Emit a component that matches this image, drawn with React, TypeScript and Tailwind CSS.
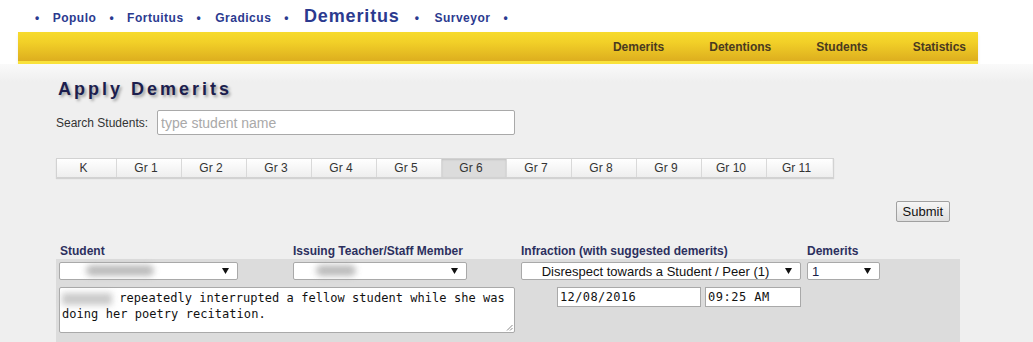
const grades = ["K", "Gr 1", "Gr 2", "Gr 3", "Gr 4", "Gr 5", "Gr 6", "Gr 7", "Gr 8", "Gr 9", "Gr 10", "Gr 11"];

const Arrow = () => (
  <svg width="7" height="6" viewBox="0 0 7 6" className="shrink-0">
    <path d="M0 0h7L3.5 6z" fill="#111" />
  </svg>
);

const FakeSelect = ({ width, children }: { width: string; children: React.ReactNode }) => (
  <div className={`${width} h-[18px] bg-white border border-[#a9a9a9] rounded-[2px] flex items-center pr-[8px]`}>
    <div className="flex-1 min-w-0 flex items-center">{children}</div>
    <Arrow />
  </div>
);

const Blur = ({ w }: { w: string }) => (
  <span className={`${w} h-[11px] inline-block bg-[#ababab] rounded-full blur-[3px] opacity-80`} />
);

const App = () => {
  return (
    <div className="w-[1033px] h-[342px] overflow-hidden bg-[#efefef] font-['Liberation_Sans',Arial,sans-serif] text-[#222]">
      {/* site switcher */}
      <div className="h-8 bg-white flex items-baseline gap-[13px] pl-[35px] pt-[7px] leading-none text-[#2b3a8f] font-bold text-[12px] tracking-[0.5px]">
        <span>•</span>
        <span>Populo</span>
        <span>•</span>
        <span>Fortuitus</span>
        <span>•</span>
        <span className="ml-[1px]">Gradicus</span>
        <span>•</span>
        <span className="ml-[2px] text-[18px] tracking-[0.85px]">Demeritus</span>
        <span className="ml-[2px]">•</span>
        <span className="ml-[2px]">Surveyor</span>
        <span>•</span>
      </div>

      {/* yellow bar */}
      <div className="bg-white">
        <div className="ml-[18px] w-[960px] h-8 bg-[linear-gradient(to_bottom,#f7db2d,#f2d028_35%,#ddae1e)] border-b-[3px] border-[#f9e23c] shadow-[0_2px_3px_rgba(0,0,0,0.08)] flex items-center justify-end gap-[45px] pr-[12px] text-[12px] font-bold text-[#4a3a1f]">
          <span>Demerits</span>
          <span>Detentions</span>
          <span>Students</span>
          <span>Statistics</span>
        </div>
      </div>

      <div className="bg-[linear-gradient(to_bottom,#fafafa,#efefef_18px)] pl-[56px]">
        <h1 className="pt-[15px] pl-[2px] text-[18px] leading-[21px] font-bold tracking-[3px] text-[#1c1e4e] [text-shadow:2px_2px_3px_rgba(0,0,0,0.35)]">
          Apply Demerits
        </h1>

        <div className="mt-[10px] flex items-center gap-[9px] text-[12px] text-[#333]">
          <span>Search Students:</span>
          <input
            placeholder="type student name"
            className="w-[358px] h-[25px] bg-white border border-[#a9a9a9] rounded-[2px] px-[3px] text-[14px] placeholder:text-[#a9a9a9] outline-none"
          />
        </div>

        <div className="mt-[23px] flex w-[778px] h-[20px] border border-[#d2d2d2] shadow-[0_1px_1px_rgba(0,0,0,0.12)]">
          {grades.map((g, i) => (
            <div
              key={g}
              className={`${i === 0 ? "w-[60px]" : "w-[65px]"} ${
                g === "Gr 6"
                  ? "bg-[#dcdcdc] shadow-[inset_0_1px_2px_rgba(0,0,0,0.12)]"
                  : "bg-[linear-gradient(to_bottom,#ffffff,#eeeeee)]"
              } ${i < grades.length - 1 ? "border-r border-[#d9d9d9]" : ""} flex items-center justify-center pr-[6px] text-[12px] text-[#333]`}
            >
              {g}
            </div>
          ))}
        </div>

        <div className="mt-[23px] flex justify-end w-[894px]">
          <button className="h-[21px] px-[6px] border border-[#a0a0a0] rounded-[2px] bg-[linear-gradient(to_bottom,#f6f6f6,#dedede)] text-[13px] text-[#111]">
            Submit
          </button>
        </div>

        <div className="mt-[20px] w-[904px]">
          <div className="grid grid-cols-[234px_228px_286px_156px] h-[17px] items-center text-[12px] font-bold text-[#2c2f5e]">
            <span className="pl-[4px]">Student</span>
            <span className="pl-[3px]">Issuing Teacher/Staff Member</span>
            <span className="pl-[3px]">Infraction (with suggested demerits)</span>
            <span className="pl-[3px]">Demerits</span>
          </div>

          <div className="bg-[#dcdcdc] h-[90px] pt-[3px]">
            <div className="grid grid-cols-[234px_228px_286px_156px]">
              <div className="pl-[3px]">
                <FakeSelect width="w-[179px]">
                  <span className="ml-[26px]">
                    <Blur w="w-[68px]" />
                  </span>
                </FakeSelect>
              </div>
              <div className="pl-[3px]">
                <FakeSelect width="w-[174px]">
                  <span className="ml-[22px]">
                    <Blur w="w-[40px]" />
                  </span>
                </FakeSelect>
              </div>
              <div className="pl-[3px]">
                <FakeSelect width="w-[280px]">
                  <span className="w-full text-center text-[13px] text-[#111] leading-none pl-[4px]">
                    Disrespect towards a Student / Peer (1)
                  </span>
                </FakeSelect>
              </div>
              <div className="pl-[3px]">
                <FakeSelect width="w-[73px]">
                  <span className="pl-[4px] text-[13px] text-[#1a1f4a] leading-none">1</span>
                </FakeSelect>
              </div>
            </div>

            <div className="grid grid-cols-[462px_286px] mt-[7px]">
              <div className="pl-[3px]">
                <div className="relative w-[456px] h-[46px] bg-white border border-[#a9a9a9] rounded-[2px] px-[2px] py-[2px] font-['DejaVu_Sans_Mono','Liberation_Mono',monospace] text-[12px] leading-[16px] text-[#111] tracking-[0.05px]">
                  <span className="inline-block align-middle w-[50px] h-[12px] bg-[#bdbdbd] blur-[3px] opacity-80" />{" "}
                  repeatedly interrupted a fellow student while she was doing her poetry recitation.
                  <svg width="7" height="7" viewBox="0 0 7 7" className="absolute right-[1px] bottom-[1px]">
                    <path d="M1 6.5L6.5 1M4 6.5L6.5 4" stroke="#888" strokeWidth="1" />
                  </svg>
                </div>
              </div>
              <div className="flex justify-end gap-[4px] pr-[3px]">
                <div className="w-[144px] h-[20px] bg-white border border-[#a9a9a9] flex items-center pl-[2px] font-['DejaVu_Sans_Mono','Liberation_Mono',monospace] text-[12px] tracking-[0.4px] text-[#111]">
                  12/08/2016
                </div>
                <div className="w-[96px] h-[20px] bg-white border border-[#a9a9a9] flex items-center pl-[2px] font-['DejaVu_Sans_Mono','Liberation_Mono',monospace] text-[12px] tracking-[0.5px] text-[#111] whitespace-pre">
                  09:25 AM
                </div>
              </div>
            </div>
          </div>
        </div>
      </div>
    </div>
  );
};

export default App;
